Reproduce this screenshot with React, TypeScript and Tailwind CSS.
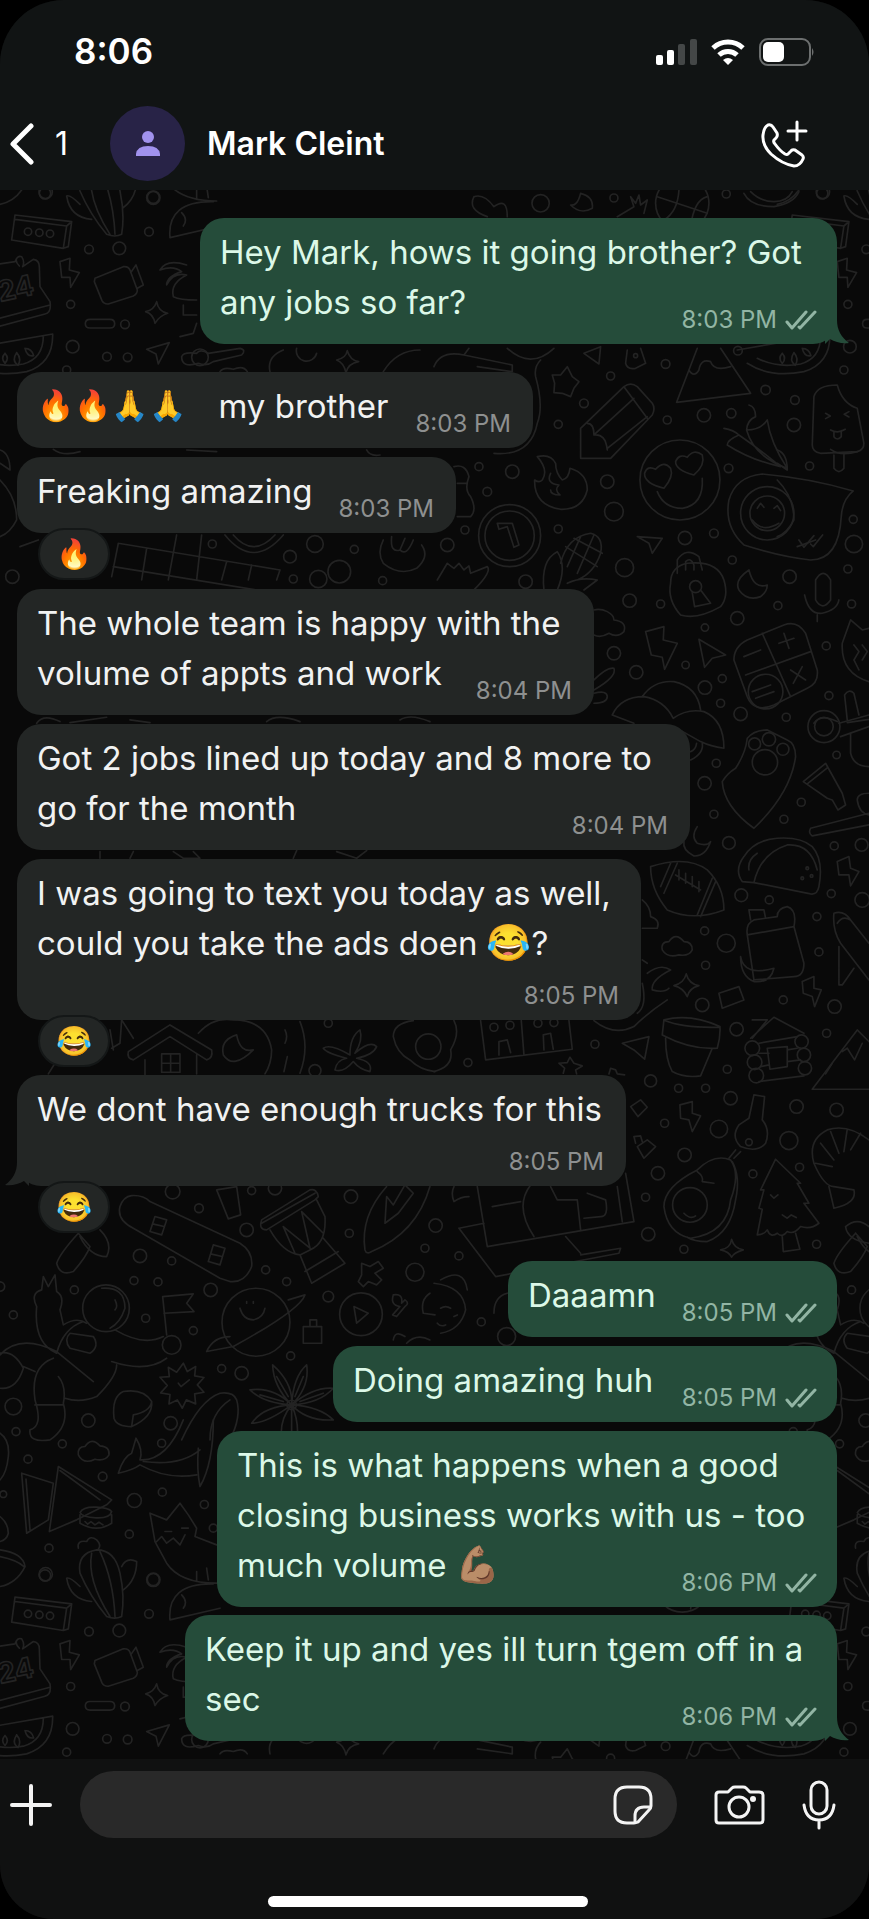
import type { ReactNode } from "react";

type Message = {
  id: number;
  lines: ReactNode[];
  time: string;
  out?: boolean;
  tail?: boolean;
  reaction?: string;
  timeBelow?: boolean;
  width: string;
  gap: string;
};

const Emoji = ({ children }: { children: ReactNode }) => (
  <span className="font-['Noto_Color_Emoji'] text-[36px] leading-none">{children}</span>
);

const MESSAGES: Message[] = [
  {
    id: 1,
    lines: ["Hey Mark, hows it going brother? Got", "any jobs so far?"],
    time: "8:03 PM",
    out: true,
    tail: true,
    width: "w-[637px]",
    gap: "mt-0"
  },
  {
    id: 2,
    lines: [
      <>
        <span className="mr-8 font-['Noto_Color_Emoji'] text-[30px] leading-none">🔥🔥🙏🙏</span>
        <span>my brother</span>
      </>
    ],
    time: "8:03 PM",
    width: "w-[516px]",
    gap: "mt-7"
  },
  { id: 3, lines: ["Freaking amazing"], time: "8:03 PM", reaction: "🔥", width: "w-[439px]", gap: "mt-[9px]" },
  {
    id: 4,
    lines: ["The whole team is happy with the", "volume of appts and work"],
    time: "8:04 PM",
    width: "w-[577px]",
    gap: "mt-[9px]"
  },
  {
    id: 5,
    lines: ["Got 2 jobs lined up today and 8 more to", "go for the month"],
    time: "8:04 PM",
    width: "w-[673px]",
    gap: "mt-[9px]"
  },
  {
    id: 6,
    lines: [
      "I was going to text you today as well,",
      <>
        <span>could you take the ads doen </span>
        <Emoji>😂</Emoji>
        <span>?</span>
      </>
    ],
    time: "8:05 PM",
    reaction: "😂",
    timeBelow: true,
    width: "w-[624px]",
    gap: "mt-[9px]"
  },
  {
    id: 7,
    lines: ["We dont have enough trucks for this"],
    time: "8:05 PM",
    tail: true,
    reaction: "😂",
    timeBelow: true,
    width: "w-[609px]",
    gap: "mt-2"
  },
  { id: 8, lines: ["Daaamn"], time: "8:05 PM", out: true, width: "w-[329px]", gap: "mt-7" },
  { id: 9, lines: ["Doing amazing huh"], time: "8:05 PM", out: true, width: "w-[504px]", gap: "mt-[9px]" },
  {
    id: 10,
    lines: [
      "This is what happens when a good",
      "closing business works with us - too",
      <>
        <span>much volume </span>
        <Emoji>💪🏽</Emoji>
      </>
    ],
    time: "8:06 PM",
    out: true,
    width: "w-[620px]",
    gap: "mt-[9px]"
  },
  {
    id: 11,
    lines: ["Keep it up and yes ill turn tgem off in a", "sec"],
    time: "8:06 PM",
    out: true,
    tail: true,
    width: "w-[652px]",
    gap: "mt-2"
  }
];

// Wallpaper doodles, in thirds of a pixel. Each group has its own origin.
type DoodleGroup = { x: number; y: number; paths: string[]; dots: number[][] };

const DOODLES: DoodleGroup[] = [
  {
    x: 0,
    y: 0,
    paths: [
      "M45 75L215 95L205 170L190 175L35 150ZM45 88L200 108L190 175M200 108L215 95",
      "M-90 250L-20 225L45 215Q52 195 65 200Q75 215 68 230L100 208Q118 210 118 230L120 290L150 335Q155 368 135 372L-80 430M-60 400L150 345M58 228Q45 215 50 205",
      "M180 215L210 205L208 240L238 248L212 292L210 262L185 262Z",
      "M285 265L370 230Q385 228 390 240L412 300Q412 312 400 318L325 342Q312 343 306 332L283 275ZM392 248L408 225L430 285L412 295",
      "M470 335Q475 365 503 370Q478 378 465 400Q460 372 437 365Q462 360 470 335Z",
      "M270 388H330Q344 388 344 401T330 414H270Q256 414 256 401T270 388Z",
      "M-120 480L158 432Q160 520 80 545Q-20 565 -90 520M130 438Q130 505 70 522Q0 535 -60 505",
      "M15 490q14 15 0 30q-14 -15 0 -30M50 488q16 18 4 38q-20 -14 -4 -38M75 475q20 0 26 22q-20 4 -26 -22",
      "M440 478L508 458L475 522L468 492Z",
      "M480 240Q500 205 560 225M480 240Q520 225 545 245Q500 260 500 285Q520 245 560 255Q510 280 520 320Q540 330 590 330M550 345v30h40M590 400L580 430L540 440",
      "M545 500Q550 485 590 490Q600 475 625 490L720 475Q740 480 725 495L640 515Q620 530 595 520Q545 535 545 500Z",
      "M660 545Q670 530 700 538Q730 525 742 545M810 545Q800 500 850 480M890 475A30 30 0 1 0 950 490M1150 545Q1190 480 1260 480M1010 510Q1038 505 1042 482Q1050 510 1076 515Q1045 520 1038 548Q1032 518 1010 510Z",
      "M355 1060L840 1140M340 1130L830 1210M355 1060L335 1160M440 1075L425 1170M530 1035L505 1170M605 1035L590 1170M680 1115L665 1170M755 1125L745 1170M840 1140L830 1170",
      "M675 1035Q760 1140 850 1035M700 1035Q760 1105 825 1035",
      "M1150 1050Q1130 1090 1150 1120Q1200 1160 1250 1135Q1290 1100 1265 1065M1175 1040Q1170 1090 1200 1080L1215 1045M1200 1080Q1220 1100 1240 1050",
      "M0 870Q50 920 50 990Q30 1030 0 1040M0 780Q30 790 30 840L0 820M60 1070L115 1050",
      "M160 778Q190 800 240 785M560 780L650 785M1100 780Q1110 800 1140 795"
    ],
    dots: [
      [84, 125, 11], [118, 128, 11], [150, 131, 11], [375, 403, 13], [460, 22, 18], [447, 125, 13],
      [267, 178, 13], [358, 175, 19], [212, 343, 12], [218, 470, 19], [321, 500, 13], [383, 502, 13],
      [200, 540, 12], [135, 10, 17], [600, 502, 25], [637, 1062, 12], [870, 1100, 19], [945, 1062, 25],
      [1063, 1078, 12], [1018, 1145, 34], [955, 1167, 26], [880, 1167, 12], [37, 1160, 20], [1148, 1172, 12]
    ]
  },
  {
    x: 1302,
    y: 0,
    paths: [
      "M120 20Q100 60 160 80M120 20Q150 10 180 50Q220 20 220 80M410 45Q430 50 440 10Q480 20 475 55Q440 75 410 45ZM550 80L600 50L590 20L605 40L615 15L620 45L640 30L630 70",
      "M670 20L820 70M690 90Q740 60 735 -30M770 110Q780 30 820 20M930 10Q950 50 1020 50Q1080 40 1095 5M950 5Q980 35 1020 35T1075 5",
      "M355 555L380 555L400 530L415 560L435 575L420 595L410 620L385 610L360 608L362 580Z",
      "M440 715L570 590Q590 575 610 590L655 640Q665 655 655 675L530 805H440ZM570 590L640 685M460 700Q480 700 480 735Q515 730 520 780M480 735L600 625M520 775L640 680",
      "M790 475L728 637L950 610L860 475M765 540Q780 565 795 540Q800 505 830 515Q840 545 890 530",
      "M580 480L575 520Q580 540 605 535L635 520L620 475M450 490L500 470L495 522ZM220 475Q290 540 360 475M320 510Q300 530 305 560Q330 650 310 700Q290 800 180 790M0 530Q20 480 90 495L235 525V545L130 530M90 495L105 475",
      "M945 645Q965 650 965 680Q940 690 938 720Q980 720 1000 690Q1010 760 1060 835Q960 800 938 720M870 715Q900 720 915 735Q880 750 880 765Q950 810 1040 830Q980 780 915 735",
      "M1140 620Q1150 585 1210 585Q1225 640 1270 655L1290 760Q1290 780 1270 785L1160 790Q1135 785 1135 765ZM1200 795V835Q1215 855 1230 835V792M1175 670l14 8l-14 8M1245 665l-14 8l14 8M1190 720q22 12 44 -2M1200 724v16q10 14 22 0v-18",
      "M310 800Q350 790 365 820Q365 850 385 870Q405 865 408 835Q460 850 460 900Q445 960 380 958Q300 945 302 870Q315 880 325 870Q345 840 310 800ZM350 850Q335 880 375 885Q360 900 378 915Q350 915 350 900",
      "M690 895Q630 880 632 850Q640 825 665 838Q690 810 710 835Q720 860 690 895ZM780 855Q725 840 725 815Q735 790 760 802Q780 775 805 795Q815 825 780 855ZM670 905Q690 955 745 955Q810 945 805 865",
      "M985 852Q1130 865 1258 903Q1225 930 1222 980Q1215 1110 1130 1110Q1040 1100 930 1065Q870 1010 885 930Q905 860 985 852ZM1095 1050l15 22l30-35M1130 1062l8 8l28-35M970 955l10-15l10 12M1020 955l10-8l10 15M955 990Q985 1030 1035 1000",
      "M190 1000L235 1000L255 1065L240 1072L220 1010L195 1018Z",
      "M380 1120Q400 1040 470 1030Q510 1040 500 1090Q480 1150 430 1170M330 1200Q320 1110 370 1085Q400 1130 370 1200M395 1070L490 1130M420 1045L505 1090M400 1130L440 1040M430 1150L480 1035M400 1180Q440 1160 490 1170L450 1200",
      "M610 1040L685 1045L655 1090L645 1060Z",
      "M730 1150V1110Q755 1070 795 1100L805 1140M755 1140V1115Q770 1100 780 1125V1140",
      "M10 1170L40 1120L60 1135L75 1120L90 1140L105 1128L110 1150L160 1130Q175 1145 120 1200",
      "M60 830Q95 820 105 860Q90 900 110 920Q130 960 110 980H70M70 880H100"
    ],
    dots: [
      [745, 40, 80], [320, 40, 26], [540, 24, 12], [877, 12, 12], [695, 522, 13],
      [530, 558, 12], [450, 640, 13], [373, 703, 12], [700, 690, 12], [810, 676, 20], [892, 670, 14],
      [1080, 705, 20], [995, 600, 14], [1083, 630, 13], [884, 835, 13], [1127, 828, 12], [135, 830, 12],
      [235, 845, 20], [160, 905, 13], [520, 875, 20], [540, 965, 28], [93, 1020, 12], [40, 1065, 20],
      [373, 1017, 12], [572, 1133, 27], [753, 1044, 20], [840, 1030, 13], [895, 1110, 12], [275, 1175, 20],
      [912, 482, 13], [738, 870, 120], [1000, 970, 80], [1000, 970, 52], [227, 1037, 93],
      [227, 1037, 74], [605, 497, 6], [1258, 988, 12], [1260, 1062, 26], [1242, 1137, 12]
    ]
  },
  {
    x: 0,
    y: 1170,
    paths: [
      "M110 430Q130 400 180 425M210 428L320 412M390 420L450 428M800 425Q830 400 900 425M1200 420Q1230 400 1290 425M300 815V835M400 815L390 835M520 815L550 835H600L580 815M890 812L880 835M1010 815L1070 835L1100 812"
    ],
    dots: []
  },
  {
    x: 1302,
    y: 1170,
    paths: [
      "M710 10Q700 60 740 105Q790 120 860 80Q885 50 870 0Q850 -60 760 -50Q710 -40 710 10ZM775 38L782 80L830 70L800 30",
      "M945 -30Q900 0 915 30Q940 65 980 50Q1000 35 1000 15Q960 30 945 -30ZM1145 0V60Q1165 95 1190 60V0Q1168 -40 1145 0M1112 45Q1125 105 1165 100Q1210 90 1215 60M1150 105v20",
      "M635 155L690 140L688 180L730 190L692 268L685 232L652 225Z",
      "M795 178L875 225L835 235L812 262Z",
      "M480 90Q500 85 520 95Q540 105 540 120Q580 125 570 155Q550 175 525 160Q500 175 480 165M480 300Q520 260 540 265Q550 290 480 330M480 340Q520 330 520 350T480 370",
      "M900 240Q900 200 940 180L1050 135Q1090 120 1115 160L1150 270Q1155 310 1120 325L1020 375Q960 400 940 350ZM985 160L1070 350M935 285L1130 215M930 230L980 210M1035 190L1080 175M1050 160L1065 205M1070 270L1115 300M1105 260L1078 310M955 335L1010 315M965 355L1020 335",
      "M535 405Q560 350 630 350Q690 360 718 415Q760 385 810 395Q870 420 870 505Q830 500 800 485L720 440M535 405L600 430M625 350Q660 300 720 305Q790 320 800 390M770 540Q810 520 805 490M770 515q15 -5 18 -25",
      "M940 475Q960 450 1000 450L1060 480Q1085 490 1085 530Q1070 640 960 745Q870 680 865 605Q880 580 905 565Q935 520 940 475Z",
      "M1215 430L1305 405M1220 470L1305 440M1240 420L1232 345Q1245 325 1260 340L1275 405M1250 460V520Q1260 560 1305 560",
      "M1305 305Q1220 280 1225 190L1250 120L1285 150L1305 145M1260 195L1275 215L1260 240L1275 270M1285 195L1300 215L1285 240",
      "M1108 605L1175 550L1225 640L1235 675L1212 690L1195 660L1180 655ZM1120 612L1182 562",
      "M1305 700L1130 745Q1122 760 1135 768L1305 735M1305 640Q1270 640 1270 660Q1275 700 1305 705",
      "M925 905Q900 870 930 830Q960 780 1030 775Q1100 770 1135 800Q1170 840 1155 920Q1150 945 1130 942L960 908ZM960 908Q980 820 1060 795Q1130 790 1150 870M945 870q-5 -30 25 -50",
      "M790 740Q770 770 790 790Q820 800 830 785Q815 830 780 828Q745 810 750 785",
      "M650 860Q760 825 820 870Q870 920 870 990Q780 1025 700 990Q650 930 650 860ZM680 920L710 850M690 940L730 850M790 1005L835 895M800 1010L845 905M725 885L800 930M735 870v30M755 880v30M775 890v30M795 905v30",
      "M940 1065L1080 1040L1110 1150Q1110 1190 1080 1190L960 1200ZM940 1065Q935 1030 960 1020L1030 1010Q1030 985 1060 980Q1090 990 1080 1040M950 1020L945 990H990L995 1015M920 1130Q930 1190 1020 1165Q1010 1210 960 1205Q920 1190 920 1130",
      "M1210 845L1245 830L1250 865L1275 875L1250 918L1245 885L1215 885ZM1105 1205L1140 1190L1140 1225L1162 1230L1142 1280L1135 1250L1108 1240Z",
      "M1200 1000Q1230 990 1250 1020L1305 1090M1200 1000Q1195 1050 1220 1090L1305 1200M1215 1100V1215H1225L1260 1165M1210 1030Q1225 1005 1250 1020",
      "M685 1110Q680 1085 705 1085Q725 1055 750 1085Q775 1085 775 1110Q765 1130 735 1125Q700 1135 685 1110Z",
      "M720 1217Q750 1210 757 1182Q765 1212 795 1217Q765 1225 760 1250Q750 1225 720 1217ZM855 1240L915 1220L930 1260L865 1285Z",
      "M625 960Q650 980 650 1010Q680 1020 670 1045L625 1045M640 1180Q680 1150 710 1170Q650 1200 655 1230Q690 1240 705 1225M625 1140L640 1150M625 1210Q640 1280 610 1300"
    ],
    dots: [
      [785, 20, 18], [587, 62, 20], [680, 72, 12], [1032, 77, 12], [1253, 72, 12], [910, 115, 20],
      [813, 143, 11], [1177, 198, 12], [540, 220, 20], [607, 277, 20], [755, 255, 11], [865, 296, 12],
      [813, 323, 20], [860, 370, 12], [920, 402, 20], [1185, 347, 12], [1057, 412, 12], [1208, 525, 11],
      [847, 550, 12], [812, 610, 20], [1102, 667, 12], [840, 703, 12], [1050, 718, 12], [885, 789, 19],
      [1201, 798, 12], [1283, 795, 19], [1192, 941, 12], [922, 946, 19], [1006, 960, 12], [1285, 960, 22],
      [812, 1053, 12], [877, 1090, 27], [1149, 1010, 12], [1155, 1116, 12], [815, 1156, 12], [1202, 1280, 20],
      [1048, 1260, 12], [805, 1275, 20], [995, 335, 52], [962, 492, 18], [1005, 478, 20], [1047, 508, 18],
      [993, 547, 38], [1170, 440, 28], [1170, 440, 48], [1120, 865, 4], [1133, 888, 4], [1105, 895, 4]
    ]
  },
  {
    x: 0,
    y: 2430,
    paths: [
      "M385 155L510 75L635 150Q640 175 620 180L510 110L400 180Q380 175 385 155ZM435 180V225M590 165V222M485 162h55v55h-55zM512 162v55M485 190h55",
      "M340 150L330 90M335 145L360 130L365 60L400 115M145 222L165 190",
      "M595 100Q640 50 700 60Q800 60 815 150Q815 190 795 222M710 105Q660 120 670 165Q700 210 760 150Q720 160 710 105ZM900 65Q930 140 900 220M855 90q10 20 0 40M862 170l-10 45",
      "M1050 165Q1050 110 1080 90Q1090 120 1065 160Q1110 120 1130 140Q1120 165 1070 175Q1120 185 1110 215Q1080 210 1060 185Q1030 220 1005 210Q1010 180 1040 175Q980 160 970 145Q990 130 1050 165",
      "M1240 62Q1180 70 1180 110Q1190 160 1230 180Q1260 210 1305 215",
      "M395 587Q430 585 450 605L720 730Q760 755 755 800Q735 850 690 845L660 835L400 685Q350 660 360 620Q370 590 395 587ZM465 650l35 10l-15 45l-35-10zM640 735l35 10l-15 50l-35-10zM458 672l34 8M632 762l34 8",
      "M650 570L710 560L722 645L685 657Z",
      "M785 660L930 570Q950 565 955 590L945 600L800 690Q775 690 785 660ZM785 670L945 580M810 690Q850 760 900 765L930 750Q980 730 975 650L950 600M900 765L935 850L1035 790L970 715M850 680L885 760M905 635L930 745L850 680M905 635L970 700M915 815L1015 755",
      "M1160 560Q1080 650 1095 750Q1100 765 1115 755Q1250 700 1290 560M1160 590L1180 615L1215 555L1240 580L1195 640L1155 670Z",
      "M1085 790l25 10l25-15l15 20l-25 15l20 20l-15 15l-25-10l-15 15l-15-15l10-20z",
      "M235 700Q180 760 170 790Q180 830 220 815Q260 770 270 740L235 700M300 690Q340 730 320 770Q270 770 240 710",
      "M305 865Q375 860 375 925Q360 970 330 985M345 900q10 20 0 30",
      "M170 1060Q100 1030 110 920Q90 880 125 870L130 830L145 860L165 825L170 875Q195 890 180 930L190 975Q230 950 260 970M170 1060Q190 985 250 965M345 990Q430 1040 490 1010M500 1075Q440 1120 335 1085M350 1095Q350 1130 290 1190Q240 1210 195 1195M0 1065Q60 1000 170 1055L280 1145M105 1200Q90 1100 160 1075M105 1200Q130 1280 90 1290Q85 1330 150 1320Q210 1280 190 1210Q200 1160 175 1130M70 1100L105 1115M0 1165Q50 1170 70 1105Q40 1050 0 1060M105 1215H190",
      "M210 1000L280 1010Q300 1040 270 1060L210 1045Q190 1020 210 1000Z",
      "M500 1005L488 890L580 882L560 910L582 935L492 940",
      "M865 900L915 885Q900 930 700 1040L620 1055Q640 1010 690 1010M720 925Q730 960 760 960Q790 955 795 925M740 905v5M760 905v5",
      "M910 980h55v50l-55 0zM930 980v-20h20v20",
      "M1062 920L1105 940L1070 970ZM1180 885Q1210 880 1205 910L1215 900Q1230 910 1215 920L1190 950L1178 945L1200 920Q1170 915 1180 885",
      "M550 1090l12 25l25-15l-3 28l28 5l-20 22l20 22l-28 5l3 30l-28-12l-12 25l-15-25l-25 12l3-28l-28-5l20-22l-22-25l28-2l-3-28l25 15zM535 1150l8 10l25-20",
      "M370 1175Q430 1165 455 1205Q460 1250 395 1280Q350 1280 342 1255Q335 1190 370 1175M455 1205Q450 1235 400 1245L395 1280",
      "M875 1215Q820 1160 818 1095Q880 1150 875 1215Q880 1130 920 1095Q930 1160 875 1215Q940 1160 1000 1165Q960 1210 875 1215Q960 1220 1000 1260Q920 1265 875 1215Q800 1270 755 1270Q790 1220 875 1215Q790 1210 750 1170Q820 1160 875 1215Q830 1270 850 1340M875 1215Q900 1270 890 1330M875 1215V1330M780 1185L850 1205M830 1130L865 1190M910 1130L885 1190M970 1180L900 1205",
      "M545 1320Q600 1200 660 1180Q700 1175 710 1200Q725 1250 690 1320M630 1320Q630 1240 690 1200",
      "M1290 880Q1260 900 1270 940L1305 945M1180 1020Q1185 990 1215 1010M1220 1030Q1250 1000 1290 1020"
    ],
    dots: [
      [1285, 140, 38], [985, 70, 12], [945, 212, 18], [518, 575, 22], [597, 625, 13], [740, 690, 20],
      [1053, 590, 20], [1048, 700, 12], [1275, 745, 12], [1245, 817, 27], [420, 768, 20],
      [515, 783, 12], [797, 810, 12], [860, 845, 12], [632, 870, 20], [402, 842, 12], [474, 846, 12],
      [223, 870, 12], [985, 890, 16], [437, 955, 12], [580, 992, 12], [40, 945, 12], [872, 1068, 12],
      [665, 1106, 12], [725, 1120, 20], [40, 1220, 25], [265, 1262, 20], [512, 1270, 20], [48, 1295, 12],
      [318, 925, 70], [515, 1035, 28], [768, 967, 102], [1083, 943, 64], [875, 1215, 14], [755, 572, 12],
      [825, 565, 20], [0, 860, 14]
    ]
  },
  {
    x: 1302,
    y: 2430,
    paths: [
      "M60 62Q80 100 50 150Q60 200 0 215M140 62L155 180L415 148L405 62M262 62L270 165M195 165V125L220 120L230 158M330 150L328 105L350 100L358 148M480 62Q540 110 600 80Q640 40 700 0",
      "M690 60Q770 40 858 80Q860 110 850 145Q770 150 685 105ZM695 115Q695 180 715 215Q750 235 800 228L835 145M692 62Q750 85 858 82",
      "M955 60L1000 60L955 115M950 115L1020 52L1110 100M975 130L1090 110M1000 145L1060 140V200L1008 208ZM975 160h30M1060 150L1090 145M980 200L1005 195M1060 185L1100 180M975 245L1110 228",
      "M1135 268L1270 90L1350 170M1135 268H1305M1225 155L1240 145L1262 180L1285 130",
      "M565 130L645 110L632 178L600 150Z",
      "M375 190L400 188L408 172L420 190L445 198L425 210L428 222M375 190L392 205L388 220M525 222L530 205L545 210L550 222L572 225",
      "M590 320L620 300L640 322L612 350ZM738 315L775 305L775 340L800 348L775 395L765 360L740 355ZM610 440L640 420L665 440L630 475ZM605 430L600 410L620 408L625 425",
      "M960 285L992 290L985 360Q1010 390 995 430Q970 460 920 440Q890 410 915 375L945 355ZM905 450L885 475M920 455L900 475",
      "M890 480Q840 460 790 510Q690 560 690 620Q700 700 770 715Q880 700 890 600Q920 520 890 480ZM895 485Q920 530 905 600Q890 700 820 725Q780 725 760 712M790 515Q810 530 805 545L840 550M750 640q20 20 35 8",
      "M1025 478L980 570L990 570L975 625L985 628L970 705Q990 705 1000 690Q1010 715 1030 700Q1045 715 1060 695Q1080 705 1100 680Q1130 690 1155 670L1110 610H1125L1090 550H1100ZM1045 710L1048 755L1098 748L1085 700M1010 585l10 10l12-10M1045 645l15 10l12-10l15 8",
      "M1140 490Q1120 420 1180 390Q1240 370 1305 420M1140 490Q1170 560 1200 560L1260 570Q1270 610 1200 625L1185 560M1160 430L1200 480M1190 395L1215 460M1240 388L1230 455M1280 400L1250 450M1145 490L1195 500",
      "M130 560L160 740L600 665L575 520M75 685L185 830L555 760L560 745L440 765M75 685L150 670M395 710L440 760M290 555Q240 620 300 710M350 560L370 600L430 600L440 690M550 560L565 665M460 580L515 600Q525 650 500 650L450 655M175 620L260 605",
      "M20 840Q90 800 100 870M0 850Q90 860 95 930Q80 990 20 1000M20 925q15 -10 30 0M60 950l10 -5M10 970q10 12 25 5M60 560Q50 580 60 605Q80 590 105 590",
      "M1235 680Q1270 650 1305 680M1235 680Q1240 720 1305 730M180 940Q180 890 220 880",
      "M860 750Q890 745 893 718Q900 745 928 750Q900 758 893 772Q885 755 860 750Z"
    ],
    dots: [
      [955, 145, 22], [962, 187, 22], [967, 227, 22], [1103, 125, 20], [1110, 165, 20], [1113, 205, 20],
      [483, 133, 12], [102, 188, 12], [908, 88, 20], [1178, 100, 12], [880, 208, 12], [650, 243, 18],
      [734, 265, 12], [815, 265, 12], [890, 295, 20], [1088, 320, 20], [1208, 330, 20], [855, 387, 26],
      [692, 370, 12], [752, 465, 20], [672, 520, 20], [1065, 422, 27], [957, 522, 12], [1097, 502, 12],
      [635, 592, 12], [643, 703, 20], [750, 748, 12], [75, 768, 12], [1148, 733, 12], [5, 677, 20],
      [142, 966, 12], [218, 1010, 27], [768, 615, 52], [945, 427, 10], [180, 82, 12], [228, 76, 12],
      [312, 70, 12], [360, 68, 12]
    ]
  },
  {
    x: 0,
    y: 3690,
    paths: [
      "M235 105Q232 80 255 80Q275 50 300 78Q330 80 327 105Q315 125 285 118Q250 135 235 105Z",
      "M355 160Q370 110 395 100L408 55Q430 90 420 120Q500 125 550 0M355 160Q400 150 420 135Q500 180 590 165M595 85Q590 150 600 200Q640 130 640 0M430 125Q540 140 600 90",
      "M65 160L160 190L145 300L80 340ZM78 178L90 330M175 140L335 240L320 255L230 300L148 335ZM180 152L300 240",
      "M240 278Q250 260 288 262T335 275Q330 296 288 294T240 278ZM240 285V310Q290 340 335 310V285M255 305l8 8l10-8l12 10l12-8l12 8",
      "M450 280L500 300L540 250L565 285L590 325L585 350L650 375M450 280L465 365L500 430Q540 490 650 490M470 365l15-15l15 20l20-15l20 20l15-30M495 335h20M545 325h20M510 600Q500 490 640 492M510 600L660 565M545 525q20 20 5 40M590 455v30M620 445l5 35",
      "M240 460Q230 400 290 390Q345 390 360 460Q375 530 365 590Q345 600 320 590Q270 530 240 460ZM275 400Q260 480 330 590M300 395Q340 480 345 590M365 440Q380 410 410 425Q410 480 370 510M240 500Q210 470 200 475Q210 540 275 545M235 385Q230 360 260 365Q270 345 290 360Q305 375 295 388",
      "M0 390Q70 400 75 440Q50 490 0 500M0 410Q50 420 72 440M0 290Q25 310 25 340Q20 360 0 365M0 40Q30 60 25 110Q20 160 0 180"
    ],
    dots: [
      [187, 72, 12], [84, 118, 12], [485, 70, 12], [308, 170, 13], [403, 242, 21], [487, 217, 12],
      [613, 254, 12], [388, 343, 12], [147, 385, 12], [137, 463, 20], [460, 480, 20], [10, 223, 10],
      [640, 325, 12]
    ]
  }
];

const TILE_W = 2332;
const TILE_H = 4147;

const Wallpaper = () => (
  <svg aria-hidden="true" className="absolute inset-0 size-full" fill="none">
    <defs>
      <g id="doodles" stroke="#232323" strokeWidth="5" strokeLinecap="round" strokeLinejoin="round">
        {DOODLES.map((group) => (
          <g key={`${group.x}-${group.y}`} transform={`translate(${group.x} ${group.y})`}>
            {group.paths.map((d) => (
              <path key={d} d={d} />
            ))}
            {group.dots.map(([cx, cy, r]) => (
              <circle key={`${cx}-${cy}-${r}`} cx={cx} cy={cy} r={r} />
            ))}
          </g>
        ))}
        <text x="0" y="335" fontSize="84" fontWeight="700" transform="rotate(-12 0 335)">
          24
        </text>
      </g>
    </defs>
    <g transform="scale(0.3333)">
      {[-TILE_H, 0, TILE_H].map((y) =>
        [0, TILE_W].map((x) => <use key={`${x}-${y}`} href="#doodles" x={x} y={y} />)
      )}
    </g>
  </svg>
);

const Ticks = () => (
  <svg
    aria-label="Delivered"
    className="h-5 w-8"
    viewBox="0 0 32 20"
    fill="none"
    stroke="currentColor"
    strokeWidth="3"
    strokeLinecap="round"
    strokeLinejoin="round"
  >
    <path d="M2 12l5 6L21 2M14 17l1 1L30 2" />
  </svg>
);

const Tail = ({ out }: { out?: boolean }) => (
  <svg
    aria-hidden="true"
    className={`absolute bottom-0 size-6 ${out ? "-right-3 text-[#254c3a]" : "-left-3 -scale-x-100 text-[#232625]"}`}
    viewBox="0 0 24 24"
    fill="currentColor"
  >
    <path d="M0 0H12C12 10 16 17 24 23C17 24 10 22 5 19L0 24Z" />
  </svg>
);

const Bubble = ({ message }: { message: Message }) => {
  const { lines, time, out, tail, reaction, timeBelow, width, gap } = message;

  return (
    <li className={`flex flex-col ${out ? "items-end" : "items-start"} ${gap}`}>
      <div
        className={`relative max-w-full rounded-[24px] px-5 pt-[9px] ${width} ${
          timeBelow ? "pb-[52px]" : "pb-[17px]"
        } ${out ? "bg-[#254c3a] text-[#dcf8e8]" : "bg-[#232625] text-[#f1f2f2]"}`}
      >
        {tail ? <Tail out={out} /> : null}
        <p className="text-[33px] leading-[50px] whitespace-pre">
          {lines.map((line, index) => (
            <span key={index} className="flex h-[50px] items-center">
              {line}
            </span>
          ))}
        </p>
        <span
          className={`absolute bottom-[10px] flex items-center gap-2 text-[24px] leading-7 ${
            out ? "right-5 text-[#92b5a4]" : "right-[22px] text-[#8e9090]"
          }`}
        >
          <time>{time}</time>
          {out ? <Ticks /> : null}
        </span>
      </div>
      {reaction ? (
        <button
          type="button"
          aria-label={`Reaction ${reaction}`}
          className="relative -mt-[5px] ml-[21px] flex h-[52px] w-[72px] items-center justify-center rounded-full border-2 border-[#141717] bg-[#232625] font-['Noto_Color_Emoji'] text-[29px] leading-none"
        >
          {reaction}
        </button>
      ) : null}
    </li>
  );
};

const StatusBar = () => (
  <div className="flex h-[103px] items-center justify-between pr-[54px] pl-[74px]">
    <time className="text-[35px] font-semibold">8:06</time>
    <div className="flex items-center gap-[14px]">
      <svg aria-label="Signal" width="41" height="26" viewBox="0 0 41 26" fill="#fff">
        <rect x="0" y="16" width="7" height="10" rx="2" />
        <rect x="11" y="11" width="7" height="15" rx="2" />
        <rect x="22" y="5" width="7" height="21" rx="2" fill="#444747" />
        <rect x="34" y="0" width="7" height="26" rx="2" fill="#444747" />
      </svg>
      <svg aria-label="Wi-Fi" width="34" height="26" viewBox="0 0 34 26" fill="none" stroke="#fff" strokeWidth="5">
        <path d="M2 9a22 22 0 0 1 30 0M8 16a13 13 0 0 1 18 0" />
        <path d="M17 26l-5-5a8 8 0 0 1 10 0z" fill="#fff" stroke="none" />
      </svg>
      <svg aria-label="Battery" width="56" height="28" viewBox="0 0 56 28" fill="none">
        <rect x="1" y="1" width="50" height="26" rx="8" stroke="#6c6f6f" strokeWidth="2" />
        <rect x="4" y="4" width="21" height="20" rx="5" fill="#fff" />
        <path d="M53 10q3 4 0 8z" fill="#6c6f6f" />
      </svg>
    </div>
  </div>
);

const ChatHeader = () => (
  <header className="bg-[#111414] text-white">
    <StatusBar />
    <div className="flex h-[87px] items-center pr-[60px] pb-[6px] pl-2">
      <a href="#chats" aria-label="Back to chats, 1 unread" className="flex items-center text-[32px]">
        <svg width="27" height="42" viewBox="0 0 27 42" fill="none" stroke="#fff" strokeWidth="5" strokeLinecap="round" strokeLinejoin="round">
          <path d="M23 3L5 21l18 18" />
        </svg>
        <span className="ml-5">1</span>
      </a>
      <span className="ml-[42px] flex size-[75px] items-center justify-center rounded-full bg-[#282347]">
        <svg aria-hidden="true" width="24" height="26" viewBox="0 0 24 26" fill="#a192ee">
          <circle cx="12" cy="6" r="6" />
          <path d="M0 25v-2Q1 15 12 15t12 8v2z" />
        </svg>
      </span>
      <h1 className="ml-[22px] text-[32px] font-semibold">Mark Cleint</h1>
      <button type="button" aria-label="Start a call" className="ml-auto">
        <svg width="48" height="48" viewBox="0 0 48 48" fill="none" stroke="#fff" strokeWidth="3" strokeLinecap="round" strokeLinejoin="round">
          <path d="M7 5q3-1 5 2l4 6q1 3-1 5l-2 2q-1 2 1 4 5 7 10 10 2 1 3 0l3-3q1-2 4-1l7 5q2 2 1 4-3 7-9 7Q21 44 10 34 1 25 2 15 3 7 7 5z" />
          <path d="M36 2v18M27 11h18" />
        </svg>
      </button>
    </div>
  </header>
);

const Composer = () => (
  <footer className="bg-[#101111] text-[#f4f4f4]">
    <form className="flex items-center pt-3 pr-8 pl-2" onSubmit={(event) => event.preventDefault()}>
      <button type="button" aria-label="Attach">
        <svg width="46" height="46" viewBox="0 0 46 46" stroke="currentColor" strokeWidth="4" strokeLinecap="round">
          <path d="M23 4v38M4 23h38" />
        </svg>
      </button>
      <div className="ml-[26px] flex h-[67px] min-w-0 flex-1 items-center rounded-full bg-[#292929] pr-6 pl-7">
        <input aria-label="Message" type="text" className="min-w-0 flex-1 bg-transparent text-[33px] outline-none" />
        <button type="button" aria-label="Stickers">
          <svg width="40" height="40" viewBox="0 0 40 40" fill="none" stroke="currentColor" strokeWidth="3" strokeLinejoin="round">
            <path d="M14 2h12q12 0 12 12v7q0 2-2 4L25 37q-2 1-4 1h-7Q2 38 2 26V14Q2 2 14 2z" />
            <path d="M22 38v-7q0-9 9-9h7" />
          </svg>
        </button>
      </div>
      <button type="button" aria-label="Camera" className="ml-9">
        <svg width="52" height="42" viewBox="0 0 52 42" fill="none" stroke="currentColor" strokeWidth="3" strokeLinejoin="round">
          <path d="M6 8h9l4-4q1-1 3-1h8q2 0 3 1l4 4h9q4 0 4 3v25q0 3-3 3H6q-3 0-3-3V11q0-3 3-3z" />
          <circle cx="26" cy="23" r="10" />
          <circle cx="40" cy="15" r="3" fill="currentColor" stroke="none" />
        </svg>
      </button>
      <button type="button" aria-label="Record voice message" className="ml-9">
        <svg width="36" height="50" viewBox="0 0 36 50" fill="none" stroke="currentColor" strokeWidth="3" strokeLinecap="round">
          <rect x="10" y="2" width="16" height="32" rx="8" />
          <path d="M3 25q2 15 15 15t15-15M18 40v8" />
        </svg>
      </button>
    </form>
    <div className="flex h-[81px] items-end justify-center pr-[14px] pb-3">
      <div className="h-[11px] w-[320px] rounded-full bg-white" />
    </div>
  </footer>
);

export default function App() {
  return (
    <div className="min-h-screen bg-black font-[Inter,'Liberation_Sans',sans-serif]">
      <div className="flex min-h-screen flex-col overflow-hidden rounded-t-[64px] rounded-b-[54px] bg-[#090909]">
        <ChatHeader />
        <main className="relative flex-1 overflow-hidden pt-7 pr-8 pb-4 pl-[17px]">
          <Wallpaper />
          <ol className="relative">
            {MESSAGES.map((message) => (
              <Bubble key={message.id} message={message} />
            ))}
          </ol>
        </main>
        <Composer />
      </div>
    </div>
  );
}
